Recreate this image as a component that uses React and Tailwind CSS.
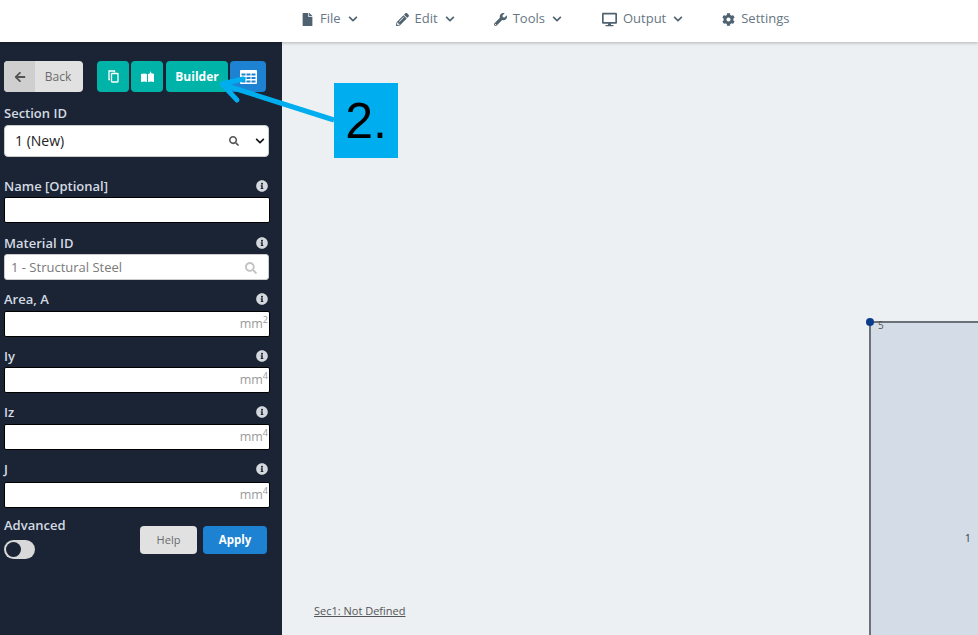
import React from "react";
import { FaFile, FaPencilAlt, FaWrench, FaDesktop, FaCog, FaChevronDown, FaArrowLeft, FaSearch, FaInfoCircle } from "react-icons/fa";

function NavItem({ icon, label, chevron = true, gap }) {
  return (
    <div className={`flex items-center gap-[6px] text-[13px] text-[#667683] ${gap}`}>
      <span className="text-[#4f6270] text-[13px]">{icon}</span>
      <span>{label}</span>
      {chevron && <FaChevronDown className="ml-[1px] text-[10px] text-[#4f6270]" />}
    </div>
  );
}

function Label({ children, info = true }) {
  return (
    <div className="flex items-center justify-between pr-[14px] h-[16px] text-[13px] font-semibold text-[#d3dae2] leading-none">
      <span>{children}</span>
      {info && <FaInfoCircle className="text-[12px] text-[#d5d9de]" />}
    </div>
  );
}

function NumField({ label, unit, sup, mt, gap }) {
  return (
    <div className={mt}>
      <Label>{label}</Label>
      <div className={`${gap} h-[26px] w-[266px] bg-white border border-black rounded-[2px] flex items-center justify-end pr-[1px] text-[12.5px] text-[#9a9a9a]`}>
        {unit && (
          <span className="flex items-start leading-none mt-[1px]">
            {unit}
            <span className="text-[9px] leading-none -mt-[3px]">{sup}</span>
          </span>
        )}
      </div>
    </div>
  );
}

export default function App() {
  return (
    <div className="w-[978px] h-[635px] overflow-hidden flex flex-col relative bg-[#ecf0f3]" style={{ fontFamily: '"Open Sans", sans-serif' }}>
      <header className="h-[42px] shrink-0 bg-white shadow-[0_1px_3px_rgba(0,0,0,0.25)] z-10 flex items-center pl-[301px] pb-[4px]">
        <NavItem icon={<FaFile />} label="File" />
        <NavItem icon={<FaPencilAlt />} label="Edit" gap="ml-[38px]" />
        <NavItem icon={<FaWrench />} label="Tools" gap="ml-[39px]" />
        <NavItem icon={<FaDesktop className="text-[15px]" />} label="Output" gap="ml-[40px]" />
        <NavItem icon={<FaCog />} label="Settings" chevron={false} gap="ml-[39px]" />
      </header>
      <div className="flex flex-1 min-h-0">
        <aside className="w-[282px] shrink-0 bg-[#1b2434] pl-[4px] pt-[19px]">
          <div className="flex items-center h-[31px]">
            <div className="w-[79px] h-[31px] rounded-[4px] bg-[#e1e1e1] flex overflow-hidden text-[12px] text-[#6b6b6b]">
              <span className="w-[31px] bg-[#cfcfcf] flex items-center justify-center"><FaArrowLeft className="text-[12px] text-[#555]" /></span>
              <span className="flex-1 flex items-center justify-center pr-[2px]">Back</span>
            </div>
            <div className="ml-[14px] w-[32px] h-[31px] rounded-[4px] bg-[#00b3a9] flex items-center justify-center text-white">
              <svg width="11" height="13" viewBox="0 0 11 13" fill="none" stroke="currentColor" strokeWidth="1.3">
                <path d="M2 9.5H1V1h5.500v1.500" />
                <rect x="3.500" y="3.500" width="6.500" height="8.500" rx="0.500" />
              </svg>
            </div>
            <div className="ml-[2px] w-[32px] h-[31px] rounded-[4px] bg-[#00b3a9] flex items-center justify-center text-white">
              <svg width="13" height="12" viewBox="0 0 13 12" fill="currentColor">
                <path d="M0 3c2-.8 4-.8 6 0v8c-2-.8-4-.8-6 0z" />
                <path d="M7 3c.6-.3 1.200-.5 1.800-.6L9.500 0l.8 2.300c1 0 1.800.2 2.700.7v8c-2-.8-4-.8-6 0z" />
              </svg>
            </div>
            <div className="ml-[3px] w-[62px] h-[31px] rounded-[4px] bg-[#00b3a9] flex items-center justify-center text-white text-[12px] font-bold">Builder</div>
            <div className="ml-[2px] w-[36px] h-[31px] rounded-[4px] bg-[#1e82d2] flex items-center justify-center text-white">
              <svg width="17" height="14" viewBox="0 0 17 14" fill="currentColor">
                <path fillRule="evenodd" d="M1 0h15a1 1 0 0 1 1 1v12a1 1 0 0 1-1 1H1a1 1 0 0 1-1-1V1a1 1 0 0 1 1-1zM1.500 3.500v2h4v-2zM6.500 3.500v2h4v-2zM11.500 3.500v2h4v-2zM1.500 7v2h4v-2zM6.500 7v2h4v-2zM11.500 7v2h4v-2zM1.500 10.500v2h4v-2zM6.500 10.500v2h4v-2zM11.500 10.500v2h4v-2z" />
              </svg>
            </div>
          </div>

          <div className="mt-[13px]"><Label info={false}>Section ID</Label></div>
          <div className="mt-[4px] h-[32px] w-[265px] bg-white rounded-[4px] border border-[#ccc] flex items-center pl-[10px] pr-[2px] pb-[1px] text-[14px] text-[#222]">
            <span className="flex-1">1 (New)</span>
            <FaSearch className="text-[10px] text-[#555]" />
            <FaChevronDown className="ml-[16px] mr-[1px] text-[10px] text-[#111]" />
          </div>

          <NumField label="Name [Optional]" mt="mt-[21px]" gap="mt-[3px]" />

          <div className="mt-[12px]">
            <Label>Material ID</Label>
            <div className="mt-[3px] h-[26px] w-[265px] bg-white rounded-[3px] border border-[#ccc] flex items-center pl-[6px] pr-[11px] pt-[1px] text-[13px] text-[#7a7a7a]">
              <span className="flex-1">1 - Structural Steel</span>
              <FaSearch className="text-[12px] text-[#c4c4c4]" />
            </div>
          </div>

          <NumField label="Area, A" unit="mm" sup="2" mt="mt-[11px]" gap="mt-[4px]" />
          <NumField label="Iy" unit="mm" sup="4" mt="mt-[11px]" gap="mt-[3px]" />
          <NumField label="Iz" unit="mm" sup="4" mt="mt-[11px]" gap="mt-[4px]" />
          <NumField label="J" unit="mm" sup="4" mt="mt-[11px]" gap="mt-[5px]" />

          <div className="mt-[9px] flex items-start">
            <div className="w-[136px]">
              <div className="flex items-center text-[13px] font-semibold text-[#d3dae2] leading-none h-[16px]">Advanced</div>
              <div className="mt-[7px] w-[31px] h-[19px] rounded-full bg-[#d8d8d8] p-[2px]">
                <div className="w-[15px] h-[15px] rounded-full bg-[#1b2434]"></div>
              </div>
            </div>
            <div className="mt-[9px] w-[57px] h-[28px] rounded-[4px] bg-[#e1e1e1] flex items-center justify-center text-[11px] text-[#6b6b6b]">Help</div>
            <div className="mt-[9px] ml-[6px] w-[64px] h-[28px] rounded-[4px] bg-[#1e82d2] flex items-center justify-center text-[11.5px] font-bold text-white">Apply</div>
          </div>
        </aside>
        <main className="flex-1 relative overflow-hidden bg-[#ecf0f3]">
          <div className="absolute left-[587px] top-[279px] w-[200px] h-[400px] bg-[#d4dde7] border-l-2 border-t-2 border-[#6a7278]"></div>
          <div className="absolute left-[584px] top-[276px] w-[8px] h-[8px] rounded-full bg-[#0b3c8c]"></div>
          <span className="absolute left-[596px] top-[276px] text-[10px] leading-[14px] text-[#555]">5</span>
          <span className="absolute left-[683px] top-[489px] text-[10px] leading-[14px] text-[#333]">1</span>
          <span className="absolute left-[32px] top-[562px] text-[11px] leading-[14px] text-[#555] underline">Sec1: Not Defined</span>
        </main>
      </div>
      <svg className="absolute left-0 top-0 pointer-events-none" width="978" height="635" fill="none">
        <path d="M334 120 L224 85" stroke="#00aeef" strokeWidth="5" />
        <path d="M243 79 L222 84 L237 100" stroke="#00aeef" strokeWidth="5" strokeLinecap="round" strokeLinejoin="round" />
      </svg>
      <div className="absolute left-[334px] top-[83px] w-[64px] h-[75px] bg-[#00aeef] flex items-center justify-center text-[50px] text-black leading-none" style={{ fontFamily: '"Liberation Sans", sans-serif' }}>2.</div>
    </div>
  );
}
